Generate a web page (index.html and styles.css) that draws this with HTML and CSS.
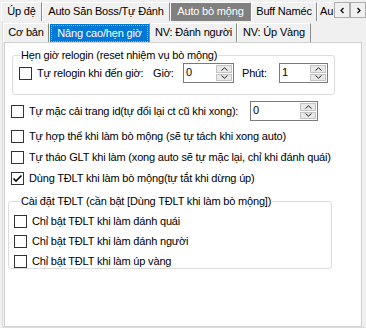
FILE: index.html
```html
<!DOCTYPE html>
<html lang="vi">

<head>
 <meta charset="UTF-8">
 <link rel="stylesheet" href="styles.css">
 <title>Auto bò mộng</title>
</head>

<body>
 <div class="top-strip">
  <div class="tab-list">
   <div class="tab w-up">Úp đệ</div>
   <div class="tab w-san">Auto Săn Boss/Tự Đánh</div>
   <div class="tab w-bo selected-gray">Auto bò mộng</div>
   <div class="tab w-buff">Buff Naméc</div>
   <div class="tab w-more">Au</div>
  </div>
  <div class="scroll-btns">
   <div class="scroll-btn">
    <svg width="7" height="7" viewBox="0 0 7 7"><path d="M4.5 1 L2 3.5 L4.5 6" fill="none" stroke="#000" stroke-width="1.2"/></svg>
   </div>
   <div class="scroll-btn">
    <svg width="7" height="7" viewBox="0 0 7 7"><path d="M2.5 1 L5 3.5 L2.5 6" fill="none" stroke="#000" stroke-width="1.2"/></svg>
   </div>
  </div>
 </div>

 <div class="outer-page">
  <div class="sub-strip">
   <div class="tab w-co">Cơ bản</div>
   <div class="tab w-nang selected-blue"><span class="focus">Nâng cao/hẹn giờ</span></div>
   <div class="tab w-danh">NV: Đánh người</div>
   <div class="tab w-vang">NV: Úp Vàng</div>
  </div>

  <div class="page">
   <fieldset class="group group-relogin">
    <legend>Hẹn giờ relogin (reset nhiệm vụ bò mộng)</legend>
    <div class="row row-relogin">
     <span class="check"></span>
     <span class="label w-relogin">Tự relogin khi đến giờ:</span>
     <span class="label w-gio">Giờ:</span>
     <div class="spin w-spin-gio">
      <span class="value">0</span>
      <div class="spin-btns">
       <span class="spin-btn"><svg width="7" height="4" viewBox="0 0 7 4"><path d="M0.5 3.5 L3.5 0.8 L6.5 3.5" fill="none" stroke="#222" stroke-width="1"/></svg></span>
       <span class="spin-btn"><svg width="7" height="4" viewBox="0 0 7 4"><path d="M0.5 0.5 L3.5 3.2 L6.5 0.5" fill="none" stroke="#222" stroke-width="1"/></svg></span>
      </div>
     </div>
     <span class="label w-phut">Phút:</span>
     <div class="spin w-spin-phut">
      <span class="value">1</span>
      <div class="spin-btns">
       <span class="spin-btn"><svg width="7" height="4" viewBox="0 0 7 4"><path d="M0.5 3.5 L3.5 0.8 L6.5 3.5" fill="none" stroke="#222" stroke-width="1"/></svg></span>
       <span class="spin-btn"><svg width="7" height="4" viewBox="0 0 7 4"><path d="M0.5 0.5 L3.5 3.2 L6.5 0.5" fill="none" stroke="#222" stroke-width="1"/></svg></span>
      </div>
     </div>
    </div>
   </fieldset>

   <div class="row row-caitrang">
    <span class="check"></span>
    <span class="label w-caitrang">Tự mặc cải trang id(tự đổi lại ct cũ khi xong):</span>
    <div class="spin w-spin-id">
     <span class="value">0</span>
     <div class="spin-btns">
      <span class="spin-btn"><svg width="7" height="4" viewBox="0 0 7 4"><path d="M0.5 3.5 L3.5 0.8 L6.5 3.5" fill="none" stroke="#222" stroke-width="1"/></svg></span>
      <span class="spin-btn"><svg width="7" height="4" viewBox="0 0 7 4"><path d="M0.5 0.5 L3.5 3.2 L6.5 0.5" fill="none" stroke="#222" stroke-width="1"/></svg></span>
     </div>
    </div>
   </div>
   <div class="row row-hopthe">
    <span class="check"></span>
    <span class="label">Tự hợp thể khi làm bò mộng (sẽ tự tách khi xong auto)</span>
   </div>
   <div class="row row-glt">
    <span class="check"></span>
    <span class="label">Tự tháo GLT khi làm (xong auto sẽ tự mặc lại, chỉ khi đánh quái)</span>
   </div>
   <div class="row row-tdlt">
    <span class="check checked">
     <svg width="11" height="11" viewBox="0 0 11 11"><path d="M1.5 5.5 L4 8 L9.5 2.5" fill="none" stroke="#000" stroke-width="1.6"/></svg>
    </span>
    <span class="label">Dùng TĐLT khi làm bò mộng(tự tắt khi dừng úp)</span>
   </div>

   <fieldset class="group group-tdlt">
    <legend>Cài đặt TĐLT (cần bật [Dùng TĐLT khi làm bò mộng])</legend>
    <div class="row sub-row">
     <span class="check"></span>
     <span class="label">Chỉ bật TĐLT khi làm đánh quái</span>
    </div>
    <div class="row sub-row">
     <span class="check"></span>
     <span class="label">Chỉ bật TĐLT khi làm đánh người</span>
    </div>
    <div class="row sub-row">
     <span class="check"></span>
     <span class="label">Chỉ bật TĐLT khi làm úp vàng</span>
    </div>
   </fieldset>
  </div>
 </div>
</body>

</html>
```

FILE: styles.css
```css
/* Reset */
body,
fieldset,
legend {
 margin: 0;
 padding: 0;
}

body {
 width: 366px;
 height: 328px;
 overflow: hidden;
 background-color: #F0F0F0;
 color: #000;
 font-family: "Liberation Sans", Arial, sans-serif;
 font-size: 11px;
 letter-spacing: -0.18px;
}

/* Tab strips */
.top-strip {
 display: flex;
 height: 21px;
}

.tab-list {
 display: flex;
 flex: 1;
 overflow: hidden;
 padding: 2px 0 0 1px;
}

.tab {
 flex: none;
 box-sizing: border-box;
 height: 19px;
 line-height: 17px;
 text-align: center;
 white-space: nowrap;
 overflow: hidden;
 background-color: #F0F0F0;
 border-top: 1px solid #FFF;
 border-left: 1px solid #FFF;
 border-right: 1px solid #8A8A8A;
}

.w-up { width: 41px; }
.w-san { width: 128px; }
.w-bo { width: 81px; }
.w-buff { width: 66px; }
.w-more { width: 18px; text-align: left; padding-left: 2px; border-right: none; }

.selected-gray {
 background-color: #808080;
 color: #FFF;
}

.scroll-btns {
 display: flex;
 padding-top: 2px;
}

.scroll-btn {
 box-sizing: border-box;
 width: 16px;
 height: 16px;
 display: flex;
 align-items: center;
 justify-content: center;
 background-color: #F0F0F0;
 border: 1px solid #ADADAD;
}

.outer-page {
 margin-left: 2px;
 border-left: 1px solid #DDD;
 border-bottom: 1px solid #DDD;
 padding-left: 1px;
 height: 306px;
}

.sub-strip {
 display: flex;
 height: 21px;
 margin-left: -1px;
 padding-top: 2px;
 box-sizing: border-box;
}

.sub-strip .tab {
 height: 19px;
}

.w-co { width: 46px; }
.w-nang { width: 101px; }
.w-danh { width: 87px; }
.w-vang { width: 74px; }

.selected-blue {
 background-color: #0078D7;
 color: #FFF;
 padding: 1px;
}

.focus {
 display: block;
 height: 15px;
 line-height: 14px;
 border: 1px dotted #F2A33A;
}

/* Tab page */
.page {
 box-sizing: border-box;
 width: 358px;
 height: 285px;
 background-color: #FFF;
 border: 1px solid #D0D0D0;
 overflow: hidden;
}

.group {
 box-sizing: border-box;
 border: 1px solid #DCDCDC;
 border-radius: 3px;
}

.group legend {
 line-height: 13px;
 padding: 0 1px;
}

.group-relogin {
 width: 323px;
 margin: 6px 0 0 7px;
 padding: 0 0 11px 0;
}

.group-relogin legend {
 margin-left: 7px;
}

.group-tdlt {
 width: 324px;
 margin: 7px 0 0 3px;
 padding: 0 0 0 5px;
}

.group-tdlt legend {
 margin-left: 6px;
}

.row {
 display: flex;
 align-items: center;
 height: 20px;
 white-space: nowrap;
}

.row-relogin {
 margin-top: 1px;
 padding-left: 6px;
}

.row-caitrang {
 margin: 6px 0 0 6px;
}

.row-hopthe {
 margin: 5px 0 0 6px;
}

.row-glt,
.row-tdlt {
 margin: 1px 0 0 6px;
}

.sub-row {
 height: 14px;
 margin-top: 6px;
}

.check {
 flex: none;
 box-sizing: border-box;
 width: 13px;
 height: 13px;
 margin-right: 5px;
 border: 1px solid #333;
 background-color: #FFF;
 display: flex;
 align-items: center;
 justify-content: center;
}

.w-relogin { width: 116px; }
.w-gio { width: 30px; }
.w-phut { width: 37px; margin-left: 8px; }
.w-caitrang { width: 221px; }

/* Numeric up-down */
.spin {
 flex: none;
 box-sizing: border-box;
 height: 20px;
 display: flex;
 border: 1px solid #7A7A7A;
 background-color: #FFF;
}

.w-spin-gio { width: 51px; }
.w-spin-phut { width: 49px; }
.w-spin-id { width: 68px; }

.spin .value {
 flex: 1;
 padding-left: 2px;
 line-height: 17px;
}

.spin-btns {
 display: flex;
 flex-direction: column;
 width: 16px;
 padding: 1px;
 gap: 1px;
}

.spin-btn {
 flex: 1;
 display: flex;
 align-items: center;
 justify-content: center;
 background-color: #E8E8E8;
 border: 1px solid #C4C4C4;
 box-sizing: border-box;
}
```
